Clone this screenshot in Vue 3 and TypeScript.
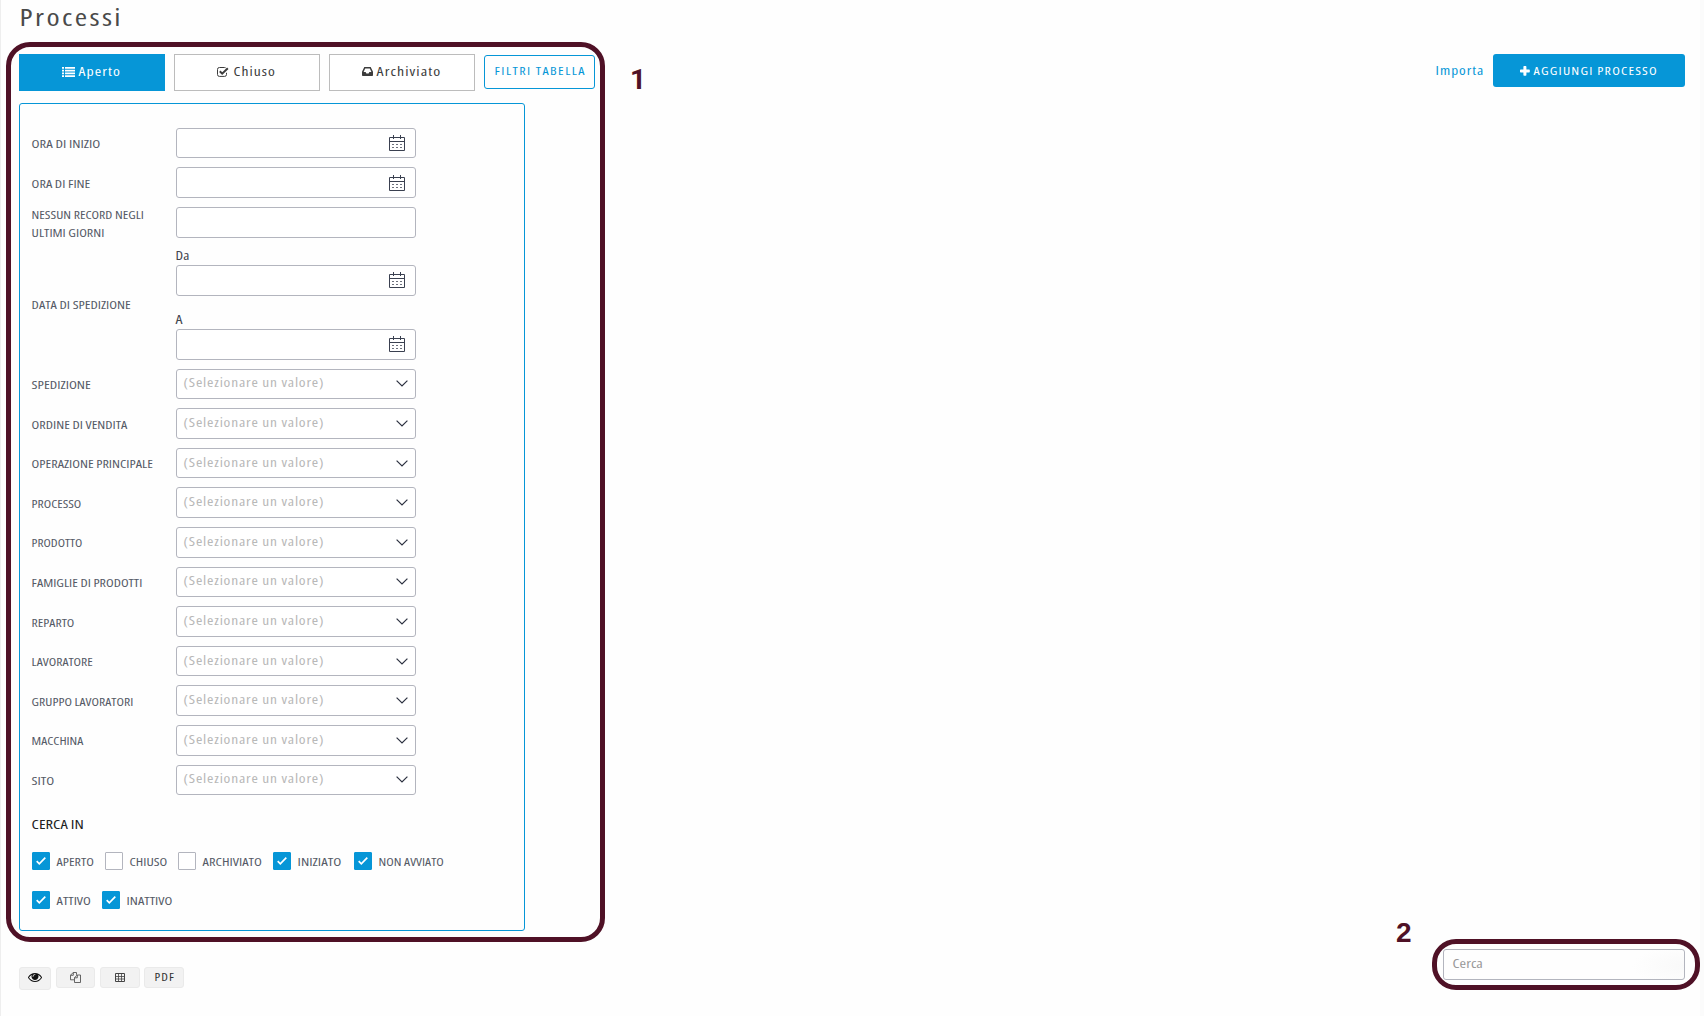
<script setup lang="ts">
import { h, ref, type FunctionalComponent } from 'vue'

interface LabelProps { t: string; w: number; cap?: number; ls?: number }

// One line of text set to an exact width; the box is as tall as the capitals.
// Spaced-out text uses the wider cut of the face.
const Txt: FunctionalComponent<LabelProps> = ({ t, w, cap = 8.2, ls = 0 }) =>
  h('svg', { width: w, height: cap, style: { display: 'block', overflow: 'visible', flex: 'none' } }, [
    h('text', {
      x: -0.4, y: cap, fill: 'currentColor', 'font-size': cap / 0.714,
      'font-stretch': ls ? 'semi-condensed' : 'condensed',
      'letter-spacing': ls, textLength: w + 0.7 + ls * 0.6, lengthAdjust: 'spacingAndGlyphs',
    }, t),
  ])
Txt.props = ['t', 'w', 'cap', 'ls']

interface Line { t: string; w: number }
const textRows: { lines: Line[]; calendar: boolean }[] = [
  { lines: [{ t: 'ORA DI INIZIO', w: 68 }], calendar: true },
  { lines: [{ t: 'ORA DI FINE', w: 58 }], calendar: true },
  { lines: [{ t: 'NESSUN RECORD NEGLI', w: 111.5 }, { t: 'ULTIMI GIORNI', w: 72 }], calendar: false },
]
const selectRows: Line[] = [
  { t: 'SPEDIZIONE', w: 58.5 },
  { t: 'ORDINE DI VENDITA', w: 95 },
  { t: 'OPERAZIONE PRINCIPALE', w: 120.5 },
  { t: 'PROCESSO', w: 49 },
  { t: 'PRODOTTO', w: 50 },
  { t: 'FAMIGLIE DI PRODOTTI', w: 110 },
  { t: 'REPARTO', w: 42 },
  { t: 'LAVORATORE', w: 60.5 },
  { t: 'GRUPPO LAVORATORI', w: 101 },
  { t: 'MACCHINA', w: 51 },
  { t: 'SITO', w: 22 },
]
const checkRows = ref([
  [
    { t: 'APERTO', w: 36.5, gap: 12.5, on: true },
    { t: 'CHIUSO', w: 37, gap: 12, on: false },
    { t: 'ARCHIVIATO', w: 58.5, gap: 12.5, on: false },
    { t: 'INIZIATO', w: 43, gap: 14, on: true },
    { t: 'NON AVVIATO', w: 64.5, gap: 0, on: true },
  ],
  [
    { t: 'ATTIVO', w: 33.5, gap: 12.5, on: true },
    { t: 'INATTIVO', w: 45, gap: 0, on: true },
  ],
])
</script>

<template>
  <div class="page">
    <h1 class="title"><Txt t="Processi" :w="101.5" :cap="17" :ls="1.9" /></h1>

    <div class="toolbar">
      <button class="tab active">
        <svg class="ic" width="13" height="10" viewBox="0 0 13 10" fill="currentColor">
          <path d="M0 0h2v1.7H0zM3 0h10v1.7H3zM0 2.75h2v1.7H0zM3 2.75h10v1.7H3zM0 5.5h2v1.7H0zM3 5.5h10v1.7H3zM0 8.25h2v1.7H0zM3 8.25h10v1.7H3z" />
        </svg>
        <Txt t="Aperto" :w="41" :cap="9.5" :ls="0.9" />
      </button>
      <button class="tab">
        <svg class="ic wide" width="12" height="10" viewBox="0 0 12 10" fill="none" stroke="currentColor">
          <path d="M9.5 5.8v1.7a1.9 1.9 0 0 1-1.9 1.9H2.4A1.9 1.9 0 0 1 .5 7.5V2.4A1.9 1.9 0 0 1 2.4.5h5.2q.6 0 1 .2" />
          <path d="M2.8 4.3 5.2 6.7 10.8 1.3" stroke-width="2" />
        </svg>
        <Txt t="Chiuso" :w="41" :cap="9.5" :ls="0.9" />
      </button>
      <button class="tab">
        <svg class="ic" width="11" height="9" viewBox="0 0 11 9" fill="currentColor">
          <path fill-rule="evenodd" d="M2.3 0h6.4L11 4.8V8.2q0 .8-.8.8H.8Q0 9 0 8.2V4.8zM3.2 1.4 1.6 5h2l.8 1.5h2.2L7.4 5h2L7.8 1.4z" />
        </svg>
        <Txt t="Archiviato" :w="63.5" :cap="9.5" :ls="0.9" />
      </button>
      <button class="filter"><Txt t="FILTRI TABELLA" :w="90" :cap="8.3" :ls="1.2" /></button>
      <div class="actions">
        <a class="link"><Txt t="Importa" :w="47.5" :cap="9" :ls="0.8" /></a>
        <button class="add">
          <svg width="10" height="10" viewBox="0 0 10 10" fill="currentColor"><path d="M3.4.7q0-.7.7-.7h1.6q.7 0 .7.7V3.4h2.7q.7 0 .7.7v1.6q0 .7-.7.7H6.4v2.7q0 .7-.7.7H4.1q-.7 0-.7-.7V6.4H.7Q0 6.4 0 5.700V4.100q0-.7.7-.7h2.700z" /></svg>
          <Txt t="AGGIUNGI PROCESSO" :w="123" :cap="8.3" :ls="1" />
        </button>
      </div>
    </div>

    <section class="panel">
      <div v-for="(row, i) in textRows" :key="i" class="row">
        <div class="name" :class="{ double: row.lines.length > 1 }">
          <Txt v-for="l in row.lines" :key="l.t" :t="l.t" :w="l.w" />
        </div>
        <div class="box">
          <svg v-if="row.calendar" class="cal" width="16" height="16" viewBox="0 0 16 16" fill="none" stroke="#3a4050">
            <path d="M.5 2.5h15v13H.5zM.5 6.5h15M4.5 0v4M11.5 0v4" />
            <path d="M3 9.5h10M3 12.5h10" stroke-dasharray="2 2" stroke="#6d717d" />
          </svg>
        </div>
      </div>

      <div class="row dates">
        <div class="name"><Txt t="DATA DI SPEDIZIONE" :w="98.5" /></div>
        <div class="pair">
          <div v-for="d in [{ t: 'Da', w: 13 }, { t: 'A', w: 6.3 }]" :key="d.t">
            <div class="sub"><Txt :t="d.t" :w="d.w" :cap="9.3" /></div>
            <div class="box">
              <svg class="cal" width="16" height="16" viewBox="0 0 16 16" fill="none" stroke="#3a4050">
                <path d="M.5 2.5h15v13H.5zM.5 6.5h15M4.5 0v4M11.5 0v4" />
                <path d="M3 9.5h10M3 12.5h10" stroke-dasharray="2 2" stroke="#6d717d" />
              </svg>
            </div>
          </div>
        </div>
      </div>

      <div v-for="row in selectRows" :key="row.t" class="row">
        <div class="name"><Txt :t="row.t" :w="row.w" /></div>
        <div class="box select">
          <Txt t="(Selezionare un valore)" :w="139.5" :cap="9.6" :ls="0.7" />
          <svg width="12" height="7" viewBox="0 0 12 7" fill="none" stroke="#2c3140" stroke-width="1.2"><path d="M.6.6 6 6 11.4.6" /></svg>
        </div>
      </div>

      <h2 class="heading"><Txt t="CERCA IN" :w="51.5" :cap="9.3" /></h2>
      <div v-for="(group, i) in checkRows" :key="i" class="checks">
        <label v-for="c in group" :key="c.t" class="check" :style="{ marginRight: c.gap + 'px' }" @click="c.on = !c.on">
          <span class="tick" :class="{ on: c.on }">
            <svg v-if="c.on" width="10" height="8" viewBox="0 0 10 8" fill="none" stroke="#fff" stroke-width="1.7"><path d="M.7 4.2 3.3 6.8 9.3.7" /></svg>
          </span>
          <Txt :t="c.t" :w="c.w" />
        </label>
      </div>
    </section>

    <footer class="footer">
      <div class="tools">
        <button class="tool eye">
          <svg width="14" height="14" viewBox="0 0 1792 1792" fill="#111"><path d="M1664 960q-152-236-381-353 61 104 61 225 0 185-131.5 316.5t-316.5 131.5-316.5-131.5-131.5-316.5q0-121 61-225-229 117-381 353 133 205 333.5 326.5t434.5 121.5 434.5-121.5 333.5-326.5zm-720-384q0-20-14-34t-34-14q-125 0-214.5 89.5t-89.5 214.5q0 20 14 34t34 14 34-14 14-34q0-86 61-147t147-61q20 0 34-14t14-34zm848 384q0 34-20 69-140 230-376.5 368.5t-499.5 138.5-499.5-139-376.5-368q-20-35-20-69t20-69q140-229 376.5-368t499.5-139 499.5 139 376.5 368q20 35 20 69z" /></svg>
        </button>
        <button class="tool copy">
          <svg width="11" height="11" viewBox="0 0 11 11" fill="none" stroke="#555" stroke-width=".9"><path d="M4 7.8H.5V3.2L3.2.5H6.5V2.8M3.3.5v2.8H.5M4.5 10.5V5.7L7.2 3h3.3v7.5zM7.3 3v2.8H4.5" /></svg>
        </button>
        <button class="tool">
          <svg width="10" height="9" viewBox="0 0 10 9" fill="none" stroke="#444"><path d="M.5.5h9v8h-9z" /><path d="M0 3.5h10M0 6h10M3.5 0v9M6.5 0v9" stroke-width=".8" /></svg>
        </button>
        <button class="tool"><Txt t="PDF" :w="19" :cap="8.3" :ls="0.9" /></button>
      </div>
      <div class="search"><Txt t="Cerca" :w="29.5" :cap="9.2" /></div>
    </footer>

    <div class="mark mark-filters"></div>
    <div class="mark mark-search"></div>
    <span class="num one">1</span>
    <span class="num two">2</span>
  </div>
</template>

<style>
body { margin: 0; background: #fff; }
</style>

<style scoped>
.page {
  position: relative;
  box-sizing: border-box;
  width: 1704px;
  height: 1016px;
  padding: 0 15px 0 18px;
  overflow: hidden;
  background: #fefefe;
  border-left: 1px solid #eee;
  border-right: 4px solid #fbfbfb;
  font-family: "Open Sans", "Noto Sans", sans-serif;
  color: #555a66;
}
button { box-sizing: border-box; margin: 0; padding: 0; font: inherit; color: inherit; background: none; border: 0; }
.title { height: 45px; margin: 0; padding: 9px 0 0 1px; font-weight: 400; color: #4a4a4a; }
.toolbar { display: flex; align-items: flex-start; gap: 9px; height: 49px; }
.tab {
  display: flex; align-items: center; justify-content: center; gap: 4px;
  width: 146px; height: 37px; padding: 0 2px 3px 0;
  border: 1px solid #bcbcbc; color: #3c3c3c; font-weight: 500; background: #fff;
}
.tab.active { background: #0696d7; border-color: #0696d7; color: #fff; font-weight: 500; }
.ic { position: relative; top: .5px; }
.ic.wide { margin-right: 1px; }
.filter {
  display: flex; align-items: center; justify-content: center; width: 111px; height: 34px; margin-top: 1px; padding: 0 0 1px 0;
  border: 1px solid #0696d7; border-radius: 3px; color: #0696d7; font-weight: 500;
}
.actions { display: flex; align-items: center; margin-left: auto; height: 33px; }
.link { margin-right: 9.5px; color: #0696d7; }
.add {
  display: flex; align-items: center; gap: 4px; width: 192px; height: 33px; padding: 1px 0 0 27px;
  border-radius: 3px; background: #0696d7; color: #fff; font-weight: 500;
}
.panel {
  box-sizing: border-box; width: 506px; height: 828px; padding: 23.8px 0 0 12px;
  border: 1px solid #0696d7; border-radius: 3px;
}
.row { display: flex; height: 30.6px; margin-bottom: 9px; }
.row.dates { height: 113px; }
.name { display: flex; flex-direction: column; justify-content: center; width: 144px; padding-top: 2.6px; box-sizing: border-box; }
.dates .name { padding-top: 4px; }
.name.double { gap: 9.8px; padding-top: 4px; }
.box {
  display: flex; align-items: center; justify-content: flex-end; box-sizing: border-box;
  width: 240px; height: 30.6px; padding-right: 10px;
  border: 1px solid #b3b5be; border-radius: 3px; background: #fff;
}
.select { justify-content: space-between; padding: 0 7px 0 7px; color: #b8b8b8; }
.select > svg:first-child { margin-bottom: 3.4px; }
.pair { display: flex; flex-direction: column; justify-content: space-between; }
.sub { height: 18.6px; padding-top: 4.6px; box-sizing: border-box; color: #41444e; }
.heading { height: 48px; margin: 0; padding-top: 15.5px; box-sizing: border-box; color: #222; font-weight: 500; }
.checks { display: flex; align-items: center; height: 18px; margin-bottom: 21px; }
.check { display: flex; align-items: center; gap: 6px; }
.check > svg { margin: 2px -.5px 0 .5px; }
.tick { display: flex; align-items: center; justify-content: center; box-sizing: border-box; width: 18px; height: 18px; border: 1px solid #b3b5be; border-radius: 1px; background: #fff; }
.tick.on { background: #0696d7; border-color: #0696d7; }
.footer { display: flex; justify-content: space-between; padding-top: 18px; }
.tools { display: flex; align-items: flex-start; gap: 4px; padding-top: 18px; }
.tool { display: flex; align-items: center; justify-content: center; width: 40px; height: 21px; border: 1px solid #eaeaea; border-radius: 3px; background: #f2f2f2; color: #333; }
.tool.eye { width: 32px; height: 23px; margin-right: 1px; padding-bottom: 3px; }
.tool.copy { width: 39px; margin-right: 1px; }
.search {
  display: flex; align-items: center; box-sizing: border-box; width: 242px; height: 31px; padding: 0 0 2px 9px;
  border: 1px solid #b3b5be; border-radius: 3px; color: #999;
  background: radial-gradient(ellipse 52px 20px at 100% 55%, #f9f9f9, #fefefe);
}
.mark { position: absolute; box-sizing: border-box; border: 5px solid #4f1126; border-radius: 24px; pointer-events: none; }
.mark-filters { left: 5px; top: 42px; width: 599px; height: 900px; }
.mark-search { left: 1431px; top: 939px; width: 268px; height: 51px; }
.num { position: absolute; font: bold 28px/28px "Liberation Sans", Arial, sans-serif; color: #4f1126; }
.one { left: 629px; top: 66px; font-family: Roboto, sans-serif; }
.two { left: 1395px; top: 919px; }
</style>
